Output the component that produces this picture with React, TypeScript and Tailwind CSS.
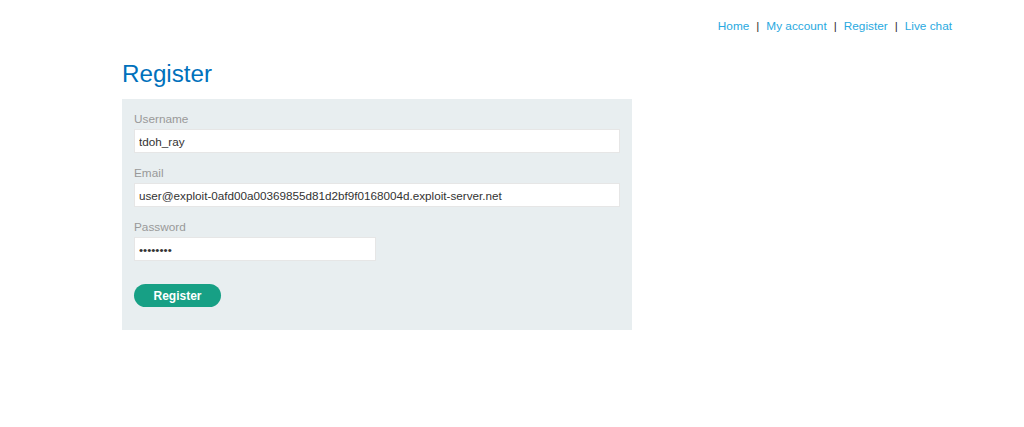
import { useState } from 'react';

const links = ['Home', 'My account', 'Register', 'Live chat'];

function Field({ label, value, type = 'text', width }: { label: string; value: string; type?: string; width: string }) {
  const [v, setV] = useState(value);
  return (
    <div className="flex flex-col">
      <label className="text-[11.8px] leading-[15px] text-[#999999] mb-[2px]">{label}</label>
      <input
        type={type}
        value={v}
        onChange={(e) => setV(e.target.value)}
        className={`${width} h-[24px] bg-white border border-[#e6e6e6] px-[4px] text-[11.7px] text-[#333333] outline-none`}
      />
    </div>
  );
}

export default function App() {
  return (
    <div className="min-h-[427px] bg-white font-['Liberation_Sans',Arial,sans-serif]">
      <nav className="flex justify-end pt-[18px] pr-[72px] text-[11.8px] leading-[16px]">
        {links.map((l, i) => (
          <span key={l} className="flex">
            {i > 0 && <span className="text-[#333333] px-[7px]">|</span>}
            <a href="#" className="text-[#29a9e0] hover:underline">{l}</a>
          </span>
        ))}
      </nav>
      <main className="pl-[122px] pt-[25px]">
        <h1 className="text-[24.2px] leading-[30px] text-[#0071bc] mb-[10px]">Register</h1>
        <form
          className="w-[510px] bg-[#e8eef0] px-[12px] pt-[13px] pb-[23px] flex flex-col gap-[13px]"
          onSubmit={(e) => e.preventDefault()}
        >
          <Field label="Username" value="tdoh_ray" width="w-full" />
          <Field label="Email" value="user@exploit-0afd00a00369855d81d2bf9f0168004d.exploit-server.net" width="w-full" />
          <Field label="Password" value="password" type="password" width="w-[242px]" />
          <button
            type="submit"
            className="mt-[10px] w-[87px] h-[23px] rounded-full bg-[#17a085] text-white text-[12px] font-bold"
          >
            Register
          </button>
        </form>
      </main>
    </div>
  );
}
